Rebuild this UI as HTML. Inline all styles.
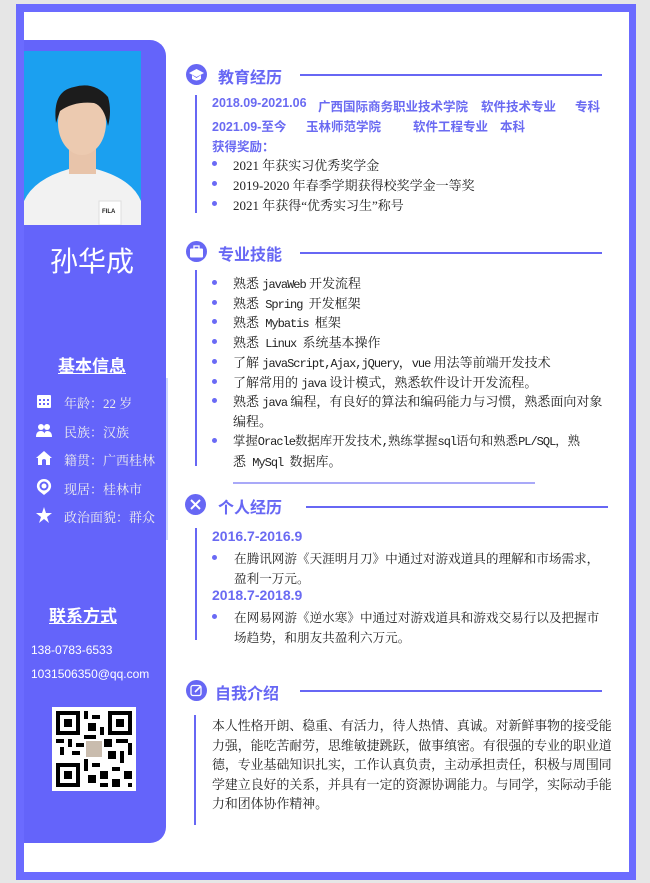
<!DOCTYPE html>
<html><head><meta charset="utf-8"><style>
*{margin:0;padding:0;box-sizing:border-box}
body{width:650px;height:883px;background:#e6e6e6;position:relative;overflow:hidden;font-family:"Liberation Serif","Noto Serif CJK SC",serif;}
.a{position:absolute;white-space:nowrap}
.frame{left:16px;top:4px;width:620px;height:876px;background:#6b6bff}
.inner{left:24px;top:12px;width:605px;height:860px;background:#fff}
.side{left:24px;top:40px;width:142px;height:803px;background:#6464fa;border-radius:0 16px 16px 0}
.w{color:#fff;font-family:"Liberation Sans","Noto Sans CJK SC",sans-serif}
.t{font-family:"Liberation Sans","Noto Sans CJK SC",sans-serif;font-weight:bold;color:#6767f4;font-size:16px}
.p{font-family:"Liberation Sans","Noto Sans CJK SC",sans-serif;font-weight:bold;color:#6a6af2;font-size:12.5px}
.b{font-size:13px;color:#222}
.m{font-family:"Liberation Mono",monospace;font-size:12px;letter-spacing:-1px}
.dot{position:absolute;width:5px;height:5px;border-radius:50%;background:#6a6af5}
.hl{position:absolute;height:1.5px;background:#6767f4}
.vl{position:absolute;width:1.5px;background:#6767f4}
.ic{position:absolute;width:21px;height:21px;border-radius:50%;background:#6767f4}
.si{position:absolute;left:36px;width:16px;height:16px}
.sl{position:absolute;left:64px;font-size:13px;color:#eee;font-family:"Liberation Serif","Noto Serif CJK SC",serif}
</style></head><body>
<div class="a frame"></div>
<div class="a inner"></div>
<div class="a side"></div>
<div class="a" style="left:166px;top:378px;width:2px;height:162px;background:#cfd8ff"></div>
<svg class="a" style="left:24px;top:51px" width="117" height="174" viewBox="0 0 117 174">
<rect width="117" height="174" fill="#1ba0f0"/>
<path d="M0 174 L0 150 Q10 128 45 118 L72 118 Q108 128 117 150 L117 174Z" fill="#f2f2f2"/>
<rect x="45" y="95" width="27" height="28" fill="#e8c4aa"/>
<ellipse cx="58" cy="72" rx="24" ry="32" fill="#eccab0"/>
<path d="M32 72 Q28 40 50 36 Q70 30 84 46 Q88 60 84 75 Q80 55 70 52 Q50 50 36 60Z" fill="#1c1c1c"/>
<rect x="75" y="150" width="22" height="24" fill="#fff" stroke="#ddd"/>
<text x="78" y="162" font-size="6" font-family="Liberation Sans" font-weight="bold" fill="#222">FILA</text>
</svg>
<div class="a w" style="left:50px;top:240px;font-size:28px">孙华成</div>
<div class="a w" style="left:58px;top:352px;font-size:17px;font-weight:bold;text-decoration:underline">基本信息</div>
<svg class="si" style="top:393px" viewBox="0 0 16 16"><rect x="1" y="2" width="14" height="13" rx="1" fill="#fff"/><g fill="#6464fa"><rect x="3" y="6" width="2" height="2"/><rect x="7" y="6" width="2" height="2"/><rect x="11" y="6" width="2" height="2"/><rect x="3" y="10" width="2" height="2"/><rect x="7" y="10" width="2" height="2"/><rect x="11" y="10" width="2" height="2"/></g></svg>
<div class="sl" style="top:393px">年龄：22 岁</div>
<svg class="si" style="top:422px" viewBox="0 0 16 16"><circle cx="5" cy="5" r="3" fill="#fff"/><circle cx="11" cy="5" r="3" fill="#fff"/><path d="M0 15 Q0 9 5 9 Q9 9 9 15Z M8 15 Q8 9 11 9 Q16 9 16 15Z" fill="#fff"/></svg>
<div class="sl" style="top:422px">民族：汉族</div>
<svg class="si" style="top:450px" viewBox="0 0 16 16"><path d="M8 1 L16 8 L14 8 L14 15 L2 15 L2 8 L0 8Z" fill="#fff"/><path d="M6 15 L6 10 Q8 8 10 10 L10 15Z" fill="#6464fa"/></svg>
<div class="sl" style="top:450px">籍贯：广西桂林</div>
<svg class="si" style="top:479px" viewBox="0 0 16 16"><path d="M8 0 A7 7 0 0 1 13 12 L8 16 L3 12 A7 7 0 0 1 8 0Z" fill="#fff"/><circle cx="8" cy="7" r="4.5" fill="#6464fa"/><circle cx="8" cy="7" r="2.5" fill="#fff"/></svg>
<div class="sl" style="top:479px">现居：桂林市</div>
<svg class="si" style="top:507px" viewBox="0 0 16 16"><path d="M8 0 L10 6 L16 6 L11 10 L13 16 L8 12 L3 16 L5 10 L0 6 L6 6Z" fill="#fff"/></svg>
<div class="sl" style="top:507px">政治面貌：群众</div>
<div class="a w" style="left:49px;top:602px;font-size:17px;font-weight:bold;text-decoration:underline">联系方式</div>
<div class="a w" style="left:31px;top:643px;font-size:12px">138-0783-6533</div>
<div class="a w" style="left:31px;top:667px;font-size:12px">1031506350@qq.com</div>
<svg class="a" style="left:52px;top:707px" width="84" height="84" viewBox="0 0 21 21">
<rect width="21" height="21" fill="#fff"/>
<g fill="#000"><path d="M1 1h6v6h-6zM14 1h6v6h-6zM1 14h6v6h-6z"/></g>
<g fill="#fff"><path d="M2 2h4v4h-4zM15 2h4v4h-4zM2 15h4v4h-4z"/></g>
<g fill="#000"><path d="M3 3h2v2h-2zM16 3h2v2h-2zM3 16h2v2h-2z"/>
<path d="M8 1h1v2h-1zM10 2h2v1h-2zM9 4h2v2h-2zM12 5h1v2h-1zM8 7h3v1h-3zM1 8h2v1h-2zM4 8h1v2h-1zM6 9h2v1h-2zM13 8h2v2h-2zM16 8h3v1h-3zM19 9h1v3h-1zM2 10h1v2h-1zM5 11h2v1h-2zM14 11h2v2h-2zM17 11h1v3h-1zM8 13h1v3h-1zM10 14h2v1h-2zM12 16h2v2h-2zM15 15h2v1h-2zM18 16h2v2h-2zM9 17h2v2h-2zM15 18h2v2h-2zM12 19h2v1h-2zM19 19h1v1h-1zM11 11h1v1h-1zM9 11h1v1h-1z"/></g>
<rect x="8.5" y="8.5" width="4" height="4" fill="#c9bcae"/>
</svg>

<div class="ic" style="left:186px;top:64px"></div>
<svg class="a" style="left:189px;top:69px" width="15" height="12" viewBox="0 0 15 12"><path d="M7.5 0 L15 4 L7.5 8 L0 4Z M3 6 L3 10 Q7.5 13 12 10 L12 6 L7.5 9Z" fill="#fff"/></svg>
<div class="a t" style="left:218px;top:64px">教育经历</div>
<div class="hl" style="left:300px;top:74px;width:302px"></div>
<div class="vl" style="left:195px;top:95px;height:118px"></div>
<div class="a p" style="left:212px;top:96px">2018.09-2021.06</div>
<div class="a p" style="left:318px;top:96px">广西国际商务职业技术学院</div>
<div class="a p" style="left:481px;top:96px">软件技术专业</div>
<div class="a p" style="left:575px;top:96px">专科</div>
<div class="a p" style="left:212px;top:116px">2021.09-至今</div>
<div class="a p" style="left:306px;top:116px">玉林师范学院</div>
<div class="a p" style="left:413px;top:116px">软件工程专业</div>
<div class="a p" style="left:500px;top:116px">本科</div>
<div class="a p" style="left:212px;top:136px">获得奖励：</div>
<div class="dot" style="left:212px;top:161px"></div><div class="a b" style="left:233px;top:155px">2021 年获实习优秀奖学金</div>
<div class="dot" style="left:212px;top:181px"></div><div class="a b" style="left:233px;top:175px">2019-2020 年春季学期获得校奖学金一等奖</div>
<div class="dot" style="left:212px;top:201px"></div><div class="a b" style="left:233px;top:195px">2021 年获得“优秀实习生”称号</div>

<div class="ic" style="left:186px;top:241px"></div>
<svg class="a" style="left:190px;top:245px" width="13" height="13" viewBox="0 0 13 13"><rect x="4" y="1" width="5" height="3" fill="none" stroke="#fff" stroke-width="1.3"/><rect x="0" y="3.5" width="13" height="9" rx="1" fill="#fff"/></svg>
<div class="a t" style="left:218px;top:241px">专业技能</div>
<div class="hl" style="left:300px;top:252px;width:302px"></div>
<div class="vl" style="left:195px;top:270px;height:196px"></div>
<div class="dot" style="left:212px;top:280px"></div><div class="a b" style="left:233px;top:273px">熟悉 <span class="m">javaWeb</span> 开发流程</div>
<div class="dot" style="left:212px;top:300px"></div><div class="a b" style="left:233px;top:293px">熟悉<span class="m"> Spring </span>开发框架</div>
<div class="dot" style="left:212px;top:319px"></div><div class="a b" style="left:233px;top:312px">熟悉<span class="m"> Mybatis </span>框架</div>
<div class="dot" style="left:212px;top:339px"></div><div class="a b" style="left:233px;top:332px">熟悉<span class="m"> Linux </span>系统基本操作</div>
<div class="dot" style="left:212px;top:359px"></div><div class="a b" style="left:233px;top:352px">了解 <span class="m">javaScript,Ajax,jQuery</span>，<span class="m">vue</span> 用法等前端开发技术</div>
<div class="dot" style="left:212px;top:379px"></div><div class="a b" style="left:233px;top:372px">了解常用的 <span class="m">java</span> 设计模式，熟悉软件设计开发流程。</div>
<div class="dot" style="left:212px;top:398px"></div><div class="a b" style="left:233px;top:391px">熟悉 <span class="m">java</span> 编程，有良好的算法和编码能力与习惯，熟悉面向对象</div>
<div class="a b" style="left:233px;top:411px">编程。</div>
<div class="dot" style="left:212px;top:438px"></div><div class="a b" style="left:233px;top:431px;font-size:12.4px">掌握<span class="m">Oracle</span>数据库开发技术<span class="m">,</span>熟练掌握<span class="m">sql</span>语句和熟悉<span class="m">PL/SQL</span>，熟</div>
<div class="a b" style="left:233px;top:451px">悉<span class="m"> MySql </span>数据库。</div>
<div class="a" style="left:233px;top:482px;width:302px;height:2px;background:#a9a9f8"></div>

<div class="ic" style="left:185px;top:494px"></div>
<svg class="a" style="left:189px;top:498px" width="13" height="13" viewBox="0 0 13 13"><path d="M2 2 L11 11 M11 2 L2 11" stroke="#fff" stroke-width="2"/></svg>
<div class="a t" style="left:218px;top:494px">个人经历</div>
<div class="hl" style="left:306px;top:506px;width:302px"></div>
<div class="vl" style="left:195px;top:528px;height:112px"></div>
<div class="a p" style="left:212px;top:528px;font-size:14px">2016.7-2016.9</div>
<div class="dot" style="left:212px;top:555px"></div><div class="a b" style="left:234px;top:548px;font-size:12.6px">在腾讯网游《天涯明月刀》中通过对游戏道具的理解和市场需求，</div>
<div class="a b" style="left:234px;top:568px;font-size:12.6px">盈利一万元。</div>
<div class="a p" style="left:212px;top:587px;font-size:14px">2018.7-2018.9</div>
<div class="dot" style="left:212px;top:614px"></div><div class="a b" style="left:234px;top:607px;font-size:12.6px">在网易网游《逆水寒》中通过对游戏道具和游戏交易行以及把握市</div>
<div class="a b" style="left:234px;top:627px;font-size:12.6px">场趋势，和朋友共盈利六万元。</div>

<div class="ic" style="left:186px;top:680px"></div>
<svg class="a" style="left:190px;top:684px" width="13" height="13" viewBox="0 0 13 13"><rect x="1" y="1.5" width="10" height="10" rx="2" fill="none" stroke="#fff" stroke-width="1.3"/><path d="M5 8 L11 2" stroke="#fff" stroke-width="1.6"/></svg>
<div class="a t" style="left:215px;top:680px">自我介绍</div>
<div class="hl" style="left:300px;top:690px;width:302px"></div>
<div class="vl" style="left:194px;top:715px;height:110px"></div>
<div class="a b" style="left:212px;top:715px;font-size:12.9px">本人性格开朗、稳重、有活力，待人热情、真诚。对新鲜事物的接受能</div>
<div class="a b" style="left:212px;top:735px;font-size:12.9px">力强，能吃苦耐劳，思维敏捷跳跃，做事缜密。有很强的专业的职业道</div>
<div class="a b" style="left:212px;top:754px;font-size:12.9px">德，专业基础知识扎实，工作认真负责，主动承担责任，积极与周围同</div>
<div class="a b" style="left:212px;top:774px;font-size:12.9px">学建立良好的关系，并具有一定的资源协调能力。与同学，实际动手能</div>
<div class="a b" style="left:212px;top:793px;font-size:12.9px">力和团体协作精神。</div>
</body></html>
